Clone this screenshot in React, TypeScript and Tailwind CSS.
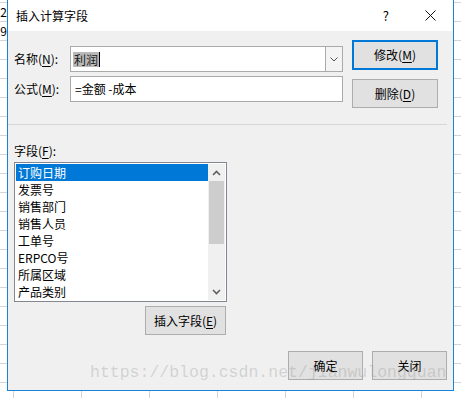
import React from "react";

// ─── Data ─────────────────────────────────────────────────────────────────────
const FIELDS = ["订购日期", "发票号", "销售部门", "销售人员", "工单号", "ERPCO号", "所属区域", "产品类别"];

// ─── Spreadsheet behind the dialog ────────────────────────────────────────────
function SheetBackground() {
  const rows = Array.from({ length: 21 });
  const cols = Array.from({ length: 7 });
  return (
    <div className="absolute inset-0">
      <div className="absolute inset-0 flex flex-col">
        <div className="h-[3px] shrink-0 border-b border-[#d4d4d4]" />
        {rows.map((_, i) => (
          <div key={i} className="flex h-[19px] shrink-0 items-center border-b border-[#d4d4d4]">
            {/* only the last digit of the row number peeks out beside the dialog */}
            <div className="flex w-[7px] justify-end overflow-hidden leading-none">
              <span className="shrink-0">{i === 0 ? "12" : i === 1 ? "19" : ""}</span>
            </div>
          </div>
        ))}
      </div>
      <div className="absolute inset-0 flex">
        <div className="w-[14px] shrink-0 border-r border-[#d4d4d4]" />
        {cols.map((_, i) => (
          <div key={i} className="w-[68px] shrink-0 border-r border-[#d4d4d4]" />
        ))}
      </div>
    </div>
  );
}

// ─── Small bits ───────────────────────────────────────────────────────────────
function Key({ k }: { k: string }) {
  return <span className="underline underline-offset-2">{k}</span>;
}

function Btn({ children, w, h = "h-[29px]", primary }: { children: React.ReactNode; w: string; h?: string; primary?: boolean }) {
  return (
    <div
      className={[
        "flex shrink-0 items-center justify-center bg-[#e1e1e1] leading-none",
        w,
        h,
        primary ? "border-2 border-[#0078d7]" : "border border-[#adadad]",
      ].join(" ")}
    >
      {children}
    </div>
  );
}

function Chevron({ up }: { up?: boolean }) {
  return (
    <svg width="9" height="6" viewBox="0 0 9 6">
      <polyline
        points={up ? "1,5 4.5,1.5 8,5" : "1,1 4.5,4.5 8,1"}
        fill="none"
        stroke="#606060"
        strokeWidth="1.6"
      />
    </svg>
  );
}

// ─── Dialog ───────────────────────────────────────────────────────────────────
function TitleBar() {
  return (
    <div className="flex h-[31px] shrink-0 items-center bg-white pl-[8px]">
      <span className="text-[12px]">插入计算字段</span>
      <span className="ml-auto text-[13px]">?</span>
      <svg className="ml-[36px] mr-[17px]" width="11" height="11" viewBox="0 0 11 11">
        <path d="M0.5 0.5 L10.5 10.5 M10.5 0.5 L0.5 10.5" stroke="#111" strokeWidth="1" />
      </svg>
    </div>
  );
}

function TopBlock() {
  return (
    <div className="flex h-[93px] shrink-0">
      <div className="ml-[6px] flex flex-col gap-[4px] pt-[15px]">
        <div className="flex h-[26px] items-center">
          <span className="w-[56px]">
            名称(<Key k="N" />):
          </span>
          <div className="flex h-full w-[273px] border border-[#aaaaaa] bg-white">
            <div className="flex flex-1 items-center pl-[2px]">
              <span className="bg-[#b9b9b9] px-px leading-[15px] text-[#1a1a1a]">利润</span>
              <span className="h-[15px] w-px bg-black" />
            </div>
            <div className="flex w-[17px] items-center justify-center border-l border-[#aaaaaa] bg-[#f4f4f4]">
              <svg width="8" height="5" viewBox="0 0 8 5">
                <polyline points="0.5,0.5 4,4 7.5,0.5" fill="none" stroke="#555" strokeWidth="1" />
              </svg>
            </div>
          </div>
        </div>
        <div className="flex h-[26px] items-center">
          <span className="w-[56px]">
            公式(<Key k="M" />):
          </span>
          <div className="flex h-full w-[273px] items-center border border-[#aaaaaa] bg-white pl-[4px]">
            =金额 -成本
          </div>
        </div>
      </div>
      <div className="ml-[9px] flex flex-col gap-[9px] pt-[9px]">
        <Btn w="w-[86px]" h="h-[30px]" primary>
          修改(<Key k="M" />)
        </Btn>
        <Btn w="w-[86px]">
          删除(<Key k="D" />)
        </Btn>
      </div>
    </div>
  );
}

function FieldList() {
  return (
    <div className="ml-[6px] mt-[3px] flex h-[140px] w-[213px] border border-[#828790] bg-white p-px">
      <div className="flex w-[192px] flex-col overflow-hidden">
        {FIELDS.map((f, i) => (
          <div
            key={f}
            className={[
              "h-[17px] shrink-0 pl-[2px] leading-[17px]",
              i === 0 ? "bg-[#0078d7] text-white" : "text-black",
            ].join(" ")}
          >
            {f}
          </div>
        ))}
      </div>
      <div className="flex w-[17px] flex-col bg-[#f0f0f0]">
        <div className="flex h-[17px] items-center justify-center">
          <Chevron up />
        </div>
        <div className="mx-px h-[63px] bg-[#cdcdcd]" />
        <div className="flex-1" />
        <div className="flex h-[17px] items-center justify-center">
          <Chevron />
        </div>
      </div>
    </div>
  );
}

export default function App() {
  return (
    <div className="relative h-[398px] w-[461px] overflow-hidden bg-white font-['Noto_Sans_CJK_SC',sans-serif] text-[12px] text-black">
      <SheetBackground />

      <div className="relative ml-[7px] flex h-[391px] w-[447px] flex-col border-x border-b border-[#1883d7] bg-[#f0f0f0]">
        <TitleBar />
        <TopBlock />

        {/* etched separator */}
        <div className="mr-[6px] h-px shrink-0 bg-[#d7d7d7]" />

        <div className="ml-[6px] mt-[18px] leading-[16px]">
          字段(<Key k="F" />):
        </div>
        <FieldList />

        <div className="ml-[137px] mt-[4px]">
          <Btn w="w-[81px]">
            插入字段(<Key k="E" />)
          </Btn>
        </div>

        <div className="mt-[16px] flex justify-end gap-[9px] pr-[6px]">
          <Btn w="w-[75px]">确定</Btn>
          <Btn w="w-[75px]">关闭</Btn>
        </div>
      </div>

      {/* blog watermark laid over the screenshot */}
      <div className="pointer-events-none absolute left-[90px] top-[365px] whitespace-nowrap font-['Liberation_Mono',monospace] text-[16.5px] leading-none text-[rgba(150,150,150,0.34)]">
        https://blog.csdn.net/jianwulongquan
      </div>
    </div>
  );
}
